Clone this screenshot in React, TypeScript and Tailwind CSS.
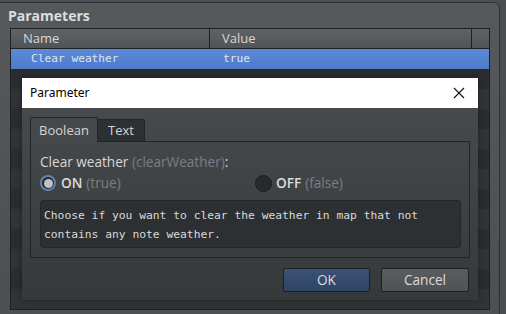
import React from 'react';

const ui = { fontFamily: '"Open Sans", "Noto Sans", sans-serif' };
const mono = { fontFamily: '"DejaVu Sans Mono", monospace' };

const stripes = Array.from({ length: 12 }, (_, i) => i);

export default function App() {
  return (
    <div className="relative w-[506px] h-[314px] overflow-hidden bg-[#4b4e51]" style={ui}>
      {/* outer frame */}
      <div className="mt-[2px] ml-[-2px] w-[502px] h-[330px] rounded-tr-[6px] border border-[#2e3032] bg-gradient-to-b from-[#56595c] to-[#4c4f52]">
        <div className="pl-[9px] pt-[4px] h-[25px] text-[14px] font-bold text-[#dedede] leading-[18px]">Parameters</div>

        {/* table */}
        <div className="ml-[11px] w-[480px] border border-[#1e2022] bg-[#2b2e30]">
          <div className="flex h-[20px] bg-gradient-to-b from-[#606366] to-[#515457] border-b border-[#1e2022] text-[13px] text-[#d6d6d6] leading-[19px]">
            <div className="w-[199px] pl-[12px] border-r border-[#1e2022]">Name</div>
            <div className="w-[262px] pl-[12px] border-r border-[#1e2022]">Value</div>
            <div className="flex-1" />
          </div>
          <div className="flex h-[20px] bg-gradient-to-b from-[#5c89d8] to-[#4f7cc9] text-[11.2px] text-[#dfe6f2] leading-[20px]" style={mono}>
            <div className="w-[200px] pl-[20px]">Clear weather</div>
            <div className="pl-[12px]">true</div>
          </div>
          {stripes.map((i) => (
            <div key={i} className={i % 2 === 0 ? 'h-[20px] bg-[#2a2d2f]' : 'h-[20px] bg-[#313436]'} />
          ))}
        </div>
      </div>

      {/* modal dialog */}
      <div className="absolute left-[22px] top-[78px] w-[456px] h-[222px] flex flex-col shadow-[0_0_6px_rgba(0,0,0,0.35)]">
        <div className="h-[30px] bg-white flex items-center justify-between pl-[8px] pr-[10px]">
          <span className="text-[12px] text-black" style={{ fontFamily: '"Noto Sans", sans-serif' }}>Parameter</span>
          <svg width="12" height="12" viewBox="0 0 12 12" className="mr-[3px]">
            <path d="M1 1 L11 11 M11 1 L1 11" stroke="#111" strokeWidth="1.1" />
          </svg>
        </div>
        <div className="flex-1 bg-gradient-to-b from-[#474a4d] to-[#36393b] px-[8px] pt-[9px]">
          {/* tabs */}
          <div className="flex h-[25px] items-end">
            <div className="h-[25px] w-[68px] border border-b-0 border-[#222426] bg-[#46494c] rounded-t-[2px] text-[13px] text-[#d4d4d4] flex items-center justify-center leading-none">Boolean</div>
            <div className="h-[23px] w-[47px] border border-l-0 border-[#222426] bg-[#2d3032] rounded-tr-[2px] text-[13px] text-[#d4d4d4] flex items-center justify-center leading-none">Text</div>
            <div className="flex-1 border-b border-[#222426]" />
          </div>
          <div className="w-[440px] h-[116px] border border-t-0 border-[#222426] px-[9px] pt-[12px]">
            <div className="text-[13.6px] text-[#d8d8d8] leading-[16px]">
              Clear weather <span className="text-[#7b7d80]">(clearWeather)</span>:
            </div>
            <div className="flex items-center h-[20px] mt-[3px]">
              <div className="flex items-center w-[215px]">
                <div className="w-[16px] h-[16px] rounded-full border-2 border-[#5f84ae] bg-[#232527] flex items-center justify-center">
                  <div className="w-[9px] h-[9px] rounded-full bg-[#c2c2c2]" />
                </div>
                <span className="ml-[5px] text-[13.6px] font-semibold text-[#dcdcdc]">ON</span>
                <span className="ml-[4px] text-[13.6px] text-[#7b7d80]">(true)</span>
              </div>
              <div className="flex items-center">
                <div className="w-[17px] h-[17px] rounded-full border border-[#1c1e1f] bg-[#27292b]" />
                <span className="ml-[4px] text-[13.6px] font-semibold text-[#dcdcdc]">OFF</span>
                <span className="ml-[4px] text-[13.6px] text-[#7b7d80]">(false)</span>
              </div>
            </div>
            <div className="mt-[7px] w-[421px] h-[48px] rounded-[3px] border border-[#242628] bg-[#2d3032] px-[3px] pt-[5px] text-[11.3px] leading-[19px] text-[#dadada]" style={mono}>
              Choose if you want to clear the weather in map that not
              <br />
              contains any note weather.
            </div>
          </div>
          <div className="flex justify-end gap-[11px] mt-[10px] pr-[1px]">
            <button className="w-[87px] h-[24px] rounded-[2px] border border-[#1c1e20] bg-gradient-to-b from-[#3b5274] to-[#2f4564] text-[13.6px] text-[#dcdcdc] leading-none">OK</button>
            <button className="w-[88px] h-[24px] rounded-[2px] border border-[#1c1e20] bg-gradient-to-b from-[#5a5d60] to-[#505356] text-[13.6px] text-[#dcdcdc] leading-none">Cancel</button>
          </div>
        </div>
      </div>
    </div>
  );
}
